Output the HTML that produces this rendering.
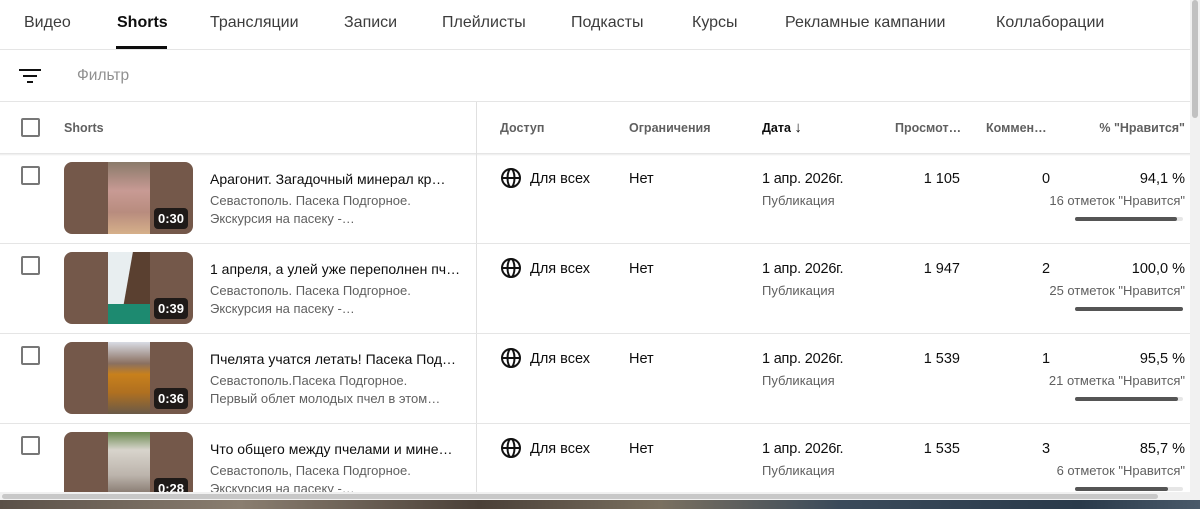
<!DOCTYPE html>
<html><head><meta charset="utf-8"><style>
*{box-sizing:border-box;margin:0;padding:0}
body{width:1200px;height:509px;overflow:hidden;background:#fff;font-family:"Liberation Sans","DejaVu Sans",sans-serif;color:#0d0d0d;position:relative}
.a{position:absolute;white-space:nowrap}
.tab{position:absolute;top:14px;font-size:16px;color:#3c3c3c}
.hl{position:absolute;left:0;width:1190px;height:1px;background:#e5e5e5}
.hd{position:absolute;top:121px;font-size:12.5px;color:#606060;font-weight:bold}
.cb{position:absolute;left:21px;width:19px;height:19px;border:2px solid #777;border-radius:2px}
.th{position:absolute;left:64px;width:129px;height:72px;border-radius:8px;background:#74584a;overflow:hidden}
.th .img{position:absolute;left:44px;top:0;width:42px;height:72px}
.th .d{position:absolute;right:5px;bottom:5px;background:#1f1a18;color:#fff;font-size:13px;font-weight:bold;padding:3px 4px;border-radius:4px}
.t{position:absolute;left:210px;font-size:14px}
.s{position:absolute;left:210px;font-size:13px;color:#606060;line-height:18px}
.c{position:absolute;font-size:14.5px}
.g{position:absolute;font-size:13px;color:#606060}
.bar{position:absolute;left:1075px;width:108px;height:4px;background:#e6e6e6;border-radius:2px}
.bar i{display:block;height:4px;background:#555;border-radius:2px}
</style></head><body>
<div class="tab" style="left:24px">Видео</div>
<div class="tab" style="left:117px;color:#0d0d0d;font-weight:bold">Shorts</div>
<div class="a" style="left:116px;top:46px;width:51px;height:3px;background:#0d0d0d"></div>
<div class="tab" style="left:210px">Трансляции</div>
<div class="tab" style="left:344px">Записи</div>
<div class="tab" style="left:442px">Плейлисты</div>
<div class="tab" style="left:571px">Подкасты</div>
<div class="tab" style="left:692px">Курсы</div>
<div class="tab" style="left:785px">Рекламные кампании</div>
<div class="tab" style="left:996px">Коллаборации</div>
<div class="hl" style="top:49px"></div>
<svg class="a" style="left:18px;top:67px" width="24" height="18"><rect x="1" y="2" width="22" height="2" fill="#111"/><rect x="5" y="8" width="14" height="2" fill="#111"/><rect x="9" y="14" width="6" height="2" fill="#111"/></svg>
<div class="a" style="left:77px;top:67px;font-size:15.5px;color:#909090">Фильтр</div>
<div class="hl" style="top:101px"></div>
<div class="cb" style="top:118px"></div>
<div class="hd" style="left:64px">Shorts</div>
<div class="hd" style="left:500px">Доступ</div>
<div class="hd" style="left:629px">Ограничения</div>
<div class="hd" style="left:762px;color:#0d0d0d;top:119px">Дата <span style="font-weight:normal;font-size:15px">↓</span></div>
<div class="hd" style="left:895px">Просмот…</div>
<div class="hd" style="left:986px">Коммен…</div>
<div class="hd" style="right:15px">% "Нравится"</div>
<div class="a" style="left:0;top:153px;width:1190px;height:3px;background:linear-gradient(#e0e0e0,#fff)"></div>
<div class="a" style="left:476px;top:102px;width:1px;height:392px;background:#e0e0e0"></div>

<div class="cb" style="top:166px"></div>
<div class="th" style="top:162px"><div class="img" style="background:linear-gradient(#8a7a6a,#c89a94 40%,#b88c7e 70%,#d6b08a)"></div><div class="d">0:30</div></div>
<div class="t" style="top:171px">Арагонит. Загадочный минерал кр…</div>
<div class="s" style="top:192px">Севастополь. Пасека Подгорное.<br>Экскурсия на пасеку -…</div>
<div class="hl" style="top:243px"></div>

<div class="cb" style="top:256px"></div>
<div class="th" style="top:252px"><div class="img" style="background:linear-gradient(100deg,#e8eef0 45%,#5a4030 46%);"></div><div class="a" style="left:44px;top:52px;width:42px;height:20px;background:#1d8a70"></div><div class="d">0:39</div></div>
<div class="t" style="top:261px">1 апреля, а улей уже переполнен пч…</div>
<div class="s" style="top:282px">Севастополь. Пасека Подгорное.<br>Экскурсия на пасеку -…</div>
<div class="hl" style="top:333px"></div>

<div class="cb" style="top:346px"></div>
<div class="th" style="top:342px"><div class="img" style="background:linear-gradient(#d8dce4,#8a7060 30%,#c8801c 45%,#b07020 70%,#6a5a48)"></div><div class="d">0:36</div></div>
<div class="t" style="top:351px">Пчелята учатся летать! Пасека Под…</div>
<div class="s" style="top:372px">Севастополь.Пасека Подгорное.<br>Первый облет молодых пчел в этом…</div>
<div class="hl" style="top:423px"></div>

<div class="cb" style="top:436px"></div>
<div class="th" style="top:432px"><div class="img" style="background:linear-gradient(#6a8a50,#d8d4cc 25%,#bcb4ac 60%,#6a5a50)"></div><div class="d">0:28</div></div>
<div class="t" style="top:441px">Что общего между пчелами и мине…</div>
<div class="s" style="top:462px">Севастополь, Пасека Подгорное.<br>Экскурсия на пасеку -…</div>

<svg class="a" style="left:500px;top:167px" width="22" height="22" viewBox="0 0 22 22"><g fill="none" stroke="#111" stroke-width="2"><circle cx="11" cy="11" r="9"/><ellipse cx="11" cy="11" rx="3.5" ry="9"/><line x1="2" y1="11" x2="20" y2="11"/></g></svg>
<svg class="a" style="left:500px;top:257px" width="22" height="22" viewBox="0 0 22 22"><g fill="none" stroke="#111" stroke-width="2"><circle cx="11" cy="11" r="9"/><ellipse cx="11" cy="11" rx="3.5" ry="9"/><line x1="2" y1="11" x2="20" y2="11"/></g></svg>
<svg class="a" style="left:500px;top:347px" width="22" height="22" viewBox="0 0 22 22"><g fill="none" stroke="#111" stroke-width="2"><circle cx="11" cy="11" r="9"/><ellipse cx="11" cy="11" rx="3.5" ry="9"/><line x1="2" y1="11" x2="20" y2="11"/></g></svg>
<svg class="a" style="left:500px;top:437px" width="22" height="22" viewBox="0 0 22 22"><g fill="none" stroke="#111" stroke-width="2"><circle cx="11" cy="11" r="9"/><ellipse cx="11" cy="11" rx="3.5" ry="9"/><line x1="2" y1="11" x2="20" y2="11"/></g></svg>

<div class="c" style="left:530px;top:171px">Для всех</div><div class="c" style="left:629px;top:171px">Нет</div><div class="c" style="left:762px;top:171px;letter-spacing:-0.2px">1 апр. 2026г.</div><div class="g" style="left:762px;top:193px">Публикация</div>
<div class="c" style="right:240px;top:171px">1 105</div><div class="c" style="left:1042px;top:171px">0</div><div class="c" style="right:15px;top:171px">94,1 %</div><div class="g" style="right:15px;top:193px">16 отметок "Нравится"</div><div class="bar" style="top:217px"><i style="width:94%"></i></div>

<div class="c" style="left:530px;top:261px">Для всех</div><div class="c" style="left:629px;top:261px">Нет</div><div class="c" style="left:762px;top:261px;letter-spacing:-0.2px">1 апр. 2026г.</div><div class="g" style="left:762px;top:283px">Публикация</div>
<div class="c" style="right:240px;top:261px">1 947</div><div class="c" style="left:1042px;top:261px">2</div><div class="c" style="right:15px;top:261px">100,0 %</div><div class="g" style="right:15px;top:283px">25 отметок "Нравится"</div><div class="bar" style="top:307px"><i style="width:100%"></i></div>

<div class="c" style="left:530px;top:351px">Для всех</div><div class="c" style="left:629px;top:351px">Нет</div><div class="c" style="left:762px;top:351px;letter-spacing:-0.2px">1 апр. 2026г.</div><div class="g" style="left:762px;top:373px">Публикация</div>
<div class="c" style="right:240px;top:351px">1 539</div><div class="c" style="left:1042px;top:351px">1</div><div class="c" style="right:15px;top:351px">95,5 %</div><div class="g" style="right:15px;top:373px">21 отметка "Нравится"</div><div class="bar" style="top:397px"><i style="width:95%"></i></div>

<div class="c" style="left:530px;top:441px">Для всех</div><div class="c" style="left:629px;top:441px">Нет</div><div class="c" style="left:762px;top:441px;letter-spacing:-0.2px">1 апр. 2026г.</div><div class="g" style="left:762px;top:463px">Публикация</div>
<div class="c" style="right:240px;top:441px">1 535</div><div class="c" style="left:1042px;top:441px">3</div><div class="c" style="right:15px;top:441px">85,7 %</div><div class="g" style="right:15px;top:463px">6 отметок "Нравится"</div><div class="bar" style="top:487px"><i style="width:86%"></i></div>

<div class="a" style="left:1190px;top:0;width:10px;height:500px;background:#f1f1f1"></div>
<div class="a" style="left:1192px;top:0;width:6px;height:118px;background:#c1c1c1;border-radius:3px"></div>
<div class="a" style="left:0;top:492px;width:1190px;height:8px;background:#f1f1f1"></div>
<div class="a" style="left:2px;top:494px;width:1156px;height:5px;background:#c8c8c8;border-radius:3px"></div>
<div class="a" style="left:0;top:500px;width:1200px;height:9px;background:linear-gradient(90deg,#5a5048,#8a7e70 20%,#4a4038 40%,#7a7060 55%,#3a4a5a 70%,#2a3a4a 90%,#4a5a6a)"></div>
</body></html>
